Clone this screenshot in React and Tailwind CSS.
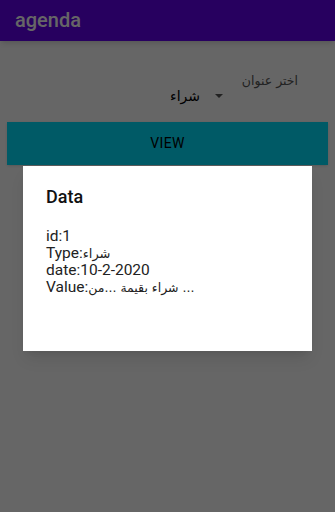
export default function App() {
  return (
    <div className="relative w-[335px] h-[512px] overflow-hidden bg-white" style={{ fontFamily: "Roboto, 'Noto Sans', sans-serif" }}>
      <div className="h-[41px] bg-[#6200ee] flex items-center pl-[15px] shadow-md">
        <span className="text-white text-[20px] font-medium leading-none pb-[2px]">agenda</span>
      </div>
      <div className="flex flex-col">
        <div className="h-[81px] relative">
          <div className="flex justify-end pr-[37px] pt-[34px]">
            <span className="text-[12.5px] text-[#555] leading-none" dir="rtl" style={{ fontFamily: "'DejaVu Sans', sans-serif" }}>اختر عنوان</span>
          </div>
          <div className="flex items-center justify-end pr-[112px] mt-[1px] gap-[15px]">
            <span className="text-[14px] text-black leading-none" dir="rtl" style={{ fontFamily: "'DejaVu Sans', sans-serif" }}>شراء</span>
            <svg width="8" height="4" viewBox="0 0 8 4"><path d="M0 0 L8 0 L4 4 Z" fill="#555" /></svg>
          </div>
        </div>
        <div className="mx-[7px] h-[43px] bg-[#00e0ff] flex items-center justify-center shadow">
          <span className="text-[14px] text-black font-normal tracking-wide">VIEW</span>
        </div>
      </div>
      <div className="absolute inset-0 bg-black/60" />
      <div className="absolute left-[23px] top-[166px] w-[289px] h-[185px] bg-white shadow-lg px-[23px] pt-[20px]">
        <div className="text-[18px] font-medium text-[#111] leading-[22px]">Data</div>
        <div className="mt-[20px] text-[15.5px] text-[#222] leading-[17px]">
          <div>id:1</div>
          <div>Type:<span className="text-[13px]" style={{ fontFamily: "'DejaVu Sans', sans-serif" }}>شراء</span></div>
          <div>date:10-2-2020</div>
          <div>Value:<span className="text-[12.5px]" style={{ fontFamily: "'DejaVu Sans', sans-serif" }}><span dir="rtl">...من</span> <span>شراء بقيمة ...</span></span></div>
        </div>
      </div>
    </div>
  );
}
